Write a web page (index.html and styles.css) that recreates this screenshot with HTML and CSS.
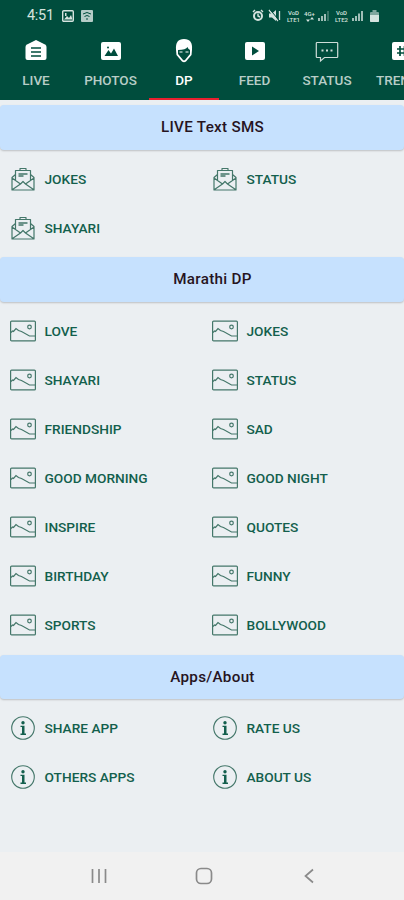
FILE: index.html
```html
<!DOCTYPE html>
<html lang="en">
<head>
<meta charset="utf-8">
<meta name="viewport" content="width=device-width, initial-scale=1">
<title>Marathi DP</title>
<link rel="stylesheet" href="styles.css">
</head>
<body>
<svg class="defs" width="0" height="0">
  <symbol id="mail" viewBox="0 0 26 26"><g fill="none" stroke="currentColor" stroke-width="1.2" stroke-linejoin="round"><path d="M5.500 8.500 2 11.500V24h22V11.500l-3.500-3M5.500 14.500V4.500h15v10M10 4.500V2.500h6v2M2 12l8.500 6M24 12l-8.500 6M2.500 23.500l8-5.500L13 15.500l2.500 2.500 8 5.500"/><path d="M8.500 8h9M8.500 10h5" stroke-width="1.400"/></g></symbol>
  <symbol id="pic" viewBox="0 0 26 26"><g fill="none" stroke="currentColor" stroke-width="1.200"><rect x=".6" y="3.100" width="24.800" height="19.800" rx="1"/><path d="M1 14.500 2.500 13l1 .5L6 10.500l2.500 2 3 1 8 4.500h5.500"/><circle cx="19.500" cy="9" r="1.800"/></g></symbol>
  <symbol id="info" viewBox="0 0 26 26"><circle cx="13" cy="13" r="11.300" fill="none" stroke="currentColor" stroke-width="1.100"/><circle cx="13" cy="7.700" r="1.700" fill="#135f4d"/><path d="M10.500 10.800h4v7.800h1.500v1.300h-5.500v-1.300H12v-6.500h-1.500z" fill="#135f4d"/></symbol>
</svg>
<header class="top">
  <div class="statusbar">
    <span class="clock">4:51</span>
    <svg class="notif" width="32" height="12" viewBox="0 0 32 12"><rect x=".7" y=".7" width="10.600" height="10.600" rx="1" fill="none" stroke="currentColor" stroke-width="1.400"/><path d="M2 9.500 5 6l2 2 2-3 1.500 4.500zM3 3h1.500v3H3z" fill="currentColor"/><rect x="19" y="0" width="12" height="12" rx="1" fill="currentColor" opacity=".85"/><path d="M21 4q4-3 8 0M22.500 6.500q2.500-2 5 0M25 8v2" fill="none" stroke="#004d3d" stroke-width="1"/></svg>
    <div class="signals">
      <svg width="29" height="13" viewBox="0 0 29 13"><g fill="none" stroke="currentColor"><circle cx="6" cy="7" r="4" stroke-width="2"/><path d="M6 4.500V7l2 1M1 3l2-2M11 3 9 1" stroke-width="1.400"/></g><path d="M17 4.500h3l4-3.500v11l-4-3.500h-3z" fill="currentColor"/><path d="m17 1 9 11M27.500 2v9" stroke="currentColor" stroke-width="1.300"/><path d="m18.500 1 9 11" stroke="#004d3d"/></svg>
      <span class="tiny"><span>VoD</span><span>LTE1</span></span>
      <span class="tiny data"><span>4G+</span><svg width="8" height="5" viewBox="0 0 8 5"><path d="M0 2.500h4L2 5zM4 2.500h4L6 0z" fill="currentColor"/></svg></span>
      <svg class="bars" width="11" height="11" viewBox="0 0 11 11"><path d="M1 8v3M4 6v5M7 4v7" stroke="currentColor" stroke-width="1.500"/><path d="M10 1v10" stroke="currentColor" stroke-width="1.200" opacity=".45"/></svg>
      <span class="tiny"><span>VoD</span><span>LTE2</span></span>
      <svg class="bars" width="11" height="11" viewBox="0 0 11 11"><path d="M1 8v3M4 6v5M7 3.500V11M10 1v10" stroke="currentColor" stroke-width="1.500"/></svg>
      <svg class="battery" width="9" height="12" viewBox="0 0 9 12"><path d="M2.500 0h4v2H8q1 0 1 1v8q0 1-1 1H1q-1 0-1-1V3q0-1 1-1h1.500z" fill="currentColor" opacity=".6"/><path d="M0 5h9v6q0 1-1 1H1q-1 0-1-1z" fill="currentColor"/></svg>
    </div>
  </div>
  <nav class="tabs">
    <a class="tab live"><svg viewBox="0 0 24 24"><path d="M12 1 21 5.500q1.500.8 1.500 2.500v11q0 2-2 2h-17q-2 0-2-2V8q0-1.700 1.500-2.500z" fill="currentColor"/><path d="M7 9h10M7 13h10M7 17h10" stroke="#004d3d" stroke-width="1.700"/></svg><span>LIVE</span></a>
    <a class="tab photos"><svg viewBox="0 0 24 24"><rect x="2" y="3" width="20" height="18" rx="2" fill="currentColor"/><path d="m5.500 17 4-6 2.500 3.500 3-5 4 7.500z" fill="#004d3d"/><circle cx="9" cy="8.500" r="1" fill="#004d3d"/></svg><span>PHOTOS</span></a>
    <a class="tab dp active"><svg viewBox="0 0 24 24"><path d="M4 11Q3 0 12 0t8 11l-.5 5-5.500 6.500q-2 1.500-4 0L4.500 16z" fill="currentColor"/><path d="M6 11q8 0 9.500-3 .5 2 2.500 3v4l-5 6q-1 .8-2 0l-5-6z" fill="#004d3d"/><path d="M7.500 13h3M13.500 13h3" stroke="currentColor"/></svg><span>DP</span></a>
    <a class="tab feed"><svg viewBox="0 0 24 24"><rect x="2" y="3" width="20" height="18" rx="2" fill="currentColor"/><path d="m9 7.500 7 4.500-7 4.500z" fill="#004d3d"/></svg><span>FEED</span></a>
    <a class="tab status"><svg viewBox="0 0 24 24"><path d="M2 3.500h20q.7 0 .7.700v13.600q0 .7-.7.700H9.500L5.500 22v-3.500H2q-.7 0-.7-.7V4.200q0-.7.700-.7z" fill="none" stroke="currentColor" stroke-width="1.200"/><path d="M6.500 10.500h2v2h-2zM11 10.500h2v2h-2zM15.500 10.500h2v2h-2z" fill="currentColor"/></svg><span>STATUS</span></a>
    <a class="tab trending"><svg viewBox="0 0 24 24"><rect x="2" y="3" width="20" height="18" rx="2" fill="currentColor"/><path d="M10 7v10M14.500 7v10M7 10h10.500M7 14h10.500" stroke="#004d3d" stroke-width="1.700"/></svg><span>TRENDING</span></a>
  </nav>
</header>
<main class="content">
  <section>
    <h2>LIVE Text SMS</h2>
    <div class="grid">
      <a class="item"><svg><use href="#mail"/></svg>JOKES</a><a class="item"><svg><use href="#mail"/></svg>STATUS</a>
      <a class="item"><svg><use href="#mail"/></svg>SHAYARI</a>
    </div>
  </section>
  <section>
    <h2>Marathi DP</h2>
    <div class="grid">
      <a class="item"><svg><use href="#pic"/></svg>LOVE</a><a class="item"><svg><use href="#pic"/></svg>JOKES</a>
      <a class="item"><svg><use href="#pic"/></svg>SHAYARI</a><a class="item"><svg><use href="#pic"/></svg>STATUS</a>
      <a class="item"><svg><use href="#pic"/></svg>FRIENDSHIP</a><a class="item"><svg><use href="#pic"/></svg>SAD</a>
      <a class="item"><svg><use href="#pic"/></svg>GOOD MORNING</a><a class="item"><svg><use href="#pic"/></svg>GOOD NIGHT</a>
      <a class="item"><svg><use href="#pic"/></svg>INSPIRE</a><a class="item"><svg><use href="#pic"/></svg>QUOTES</a>
      <a class="item"><svg><use href="#pic"/></svg>BIRTHDAY</a><a class="item"><svg><use href="#pic"/></svg>FUNNY</a>
      <a class="item"><svg><use href="#pic"/></svg>SPORTS</a><a class="item"><svg><use href="#pic"/></svg>BOLLYWOOD</a>
    </div>
  </section>
  <section>
    <h2>Apps/About</h2>
    <div class="grid">
      <a class="item"><svg><use href="#info"/></svg>SHARE APP</a><a class="item"><svg><use href="#info"/></svg>RATE US</a>
      <a class="item"><svg><use href="#info"/></svg>OTHERS APPS</a><a class="item"><svg><use href="#info"/></svg>ABOUT US</a>
    </div>
  </section>
</main>
<footer class="navbar">
  <svg width="16" height="16" viewBox="0 0 16 16"><path d="M1.500 1v14M8 1v14M14.500 1v14" stroke="currentColor" stroke-width="1.700"/></svg>
  <svg width="18" height="18" viewBox="0 0 18 18"><rect x="1.500" y="1.500" width="15" height="15" rx="4.500" fill="none" stroke="currentColor" stroke-width="1.700"/></svg>
  <svg width="16" height="16" viewBox="0 0 16 16"><path d="M12 1.500 4.500 8l7.500 6.500" fill="none" stroke="currentColor" stroke-width="1.700"/></svg>
</footer>
</body>
</html>
```
FILE: styles.css
```css
* { box-sizing: border-box; }
body {
  margin: 0;
  width: 404px;
  height: 900px;
  overflow: hidden;
  display: flex;
  flex-direction: column;
  background: #ebeff2;
  font-family: Roboto, "Liberation Sans", sans-serif;
}
.defs { display: none; }
.top { flex: none; height: 100px; background: #004d3d; color: #fff; }
.statusbar {
  height: 30px;
  padding: 1px 25px 0 27px;
  display: flex;
  align-items: center;
  color: #d5e3df;
}
.clock { width: 35px; font-size: 14.5px; letter-spacing: -0.3px; }
.signals { margin-left: auto; display: flex; align-items: center; }
.tiny {
  width: 17px;
  margin-left: 4px;
  display: flex;
  flex-direction: column;
  align-items: center;
  font-size: 6px;
  line-height: 7px;
  font-weight: 500;
}
.data { width: 13px; margin-left: 1px; }
.bars { margin-left: 2px; }
.battery { margin-left: 7px; }
.tabs { display: flex; height: 70px; overflow: hidden; }
.tab {
  flex: none;
  display: flex;
  flex-direction: column;
  align-items: center;
  padding-top: 9px;
  border-bottom: 2px solid transparent;
  font-size: 13.5px;
  line-height: 18px;
  font-weight: 500;
  color: #b8cdc7;
}
.tab svg { width: 24px; height: 24px; margin-bottom: 8px; color: #fff; }
.live { width: 72px; }
.photos { width: 77px; }
.dp { width: 70px; }
.feed { width: 71px; }
.status { width: 74px; }
.status svg { color: #cfddd9; }
.trending { width: 90px; padding-left: 12px; align-items: flex-start; }
.trending svg { margin-left: 14px; }
.active { color: #fff; border-bottom-color: #e8202f; }
.content { flex: 1; padding-top: 5px; }
h2 {
  margin: 0 0 5px;
  padding-left: 21px;
  height: 44.5px;
  border-radius: 4px;
  background: #c6e1fe;
  box-shadow: 0 1px 2px rgba(0, 0, 0, 0.2);
  text-align: center;
  font-size: 15.2px;
  letter-spacing: 0.3px;
  line-height: 45px;
  font-weight: 500;
  color: #26141f;
}
.grid { display: grid; grid-template-columns: 202px 202px; grid-auto-rows: 49.1px; margin-bottom: 4.5px; }
.item {
  display: flex;
  align-items: center;
  padding: 0 0 1px 9.5px;
  font-size: 13.7px;
  font-weight: 500;
  color: #135f4d;
}
.item svg { width: 26px; height: 26px; margin-right: 9px; color: #44776a; }
.navbar {
  flex: none;
  height: 48px;
  padding: 0 87px 0 91px;
  display: flex;
  align-items: center;
  justify-content: space-between;
  background: #f1f1f1;
  color: #8a8a8a;
}
```
